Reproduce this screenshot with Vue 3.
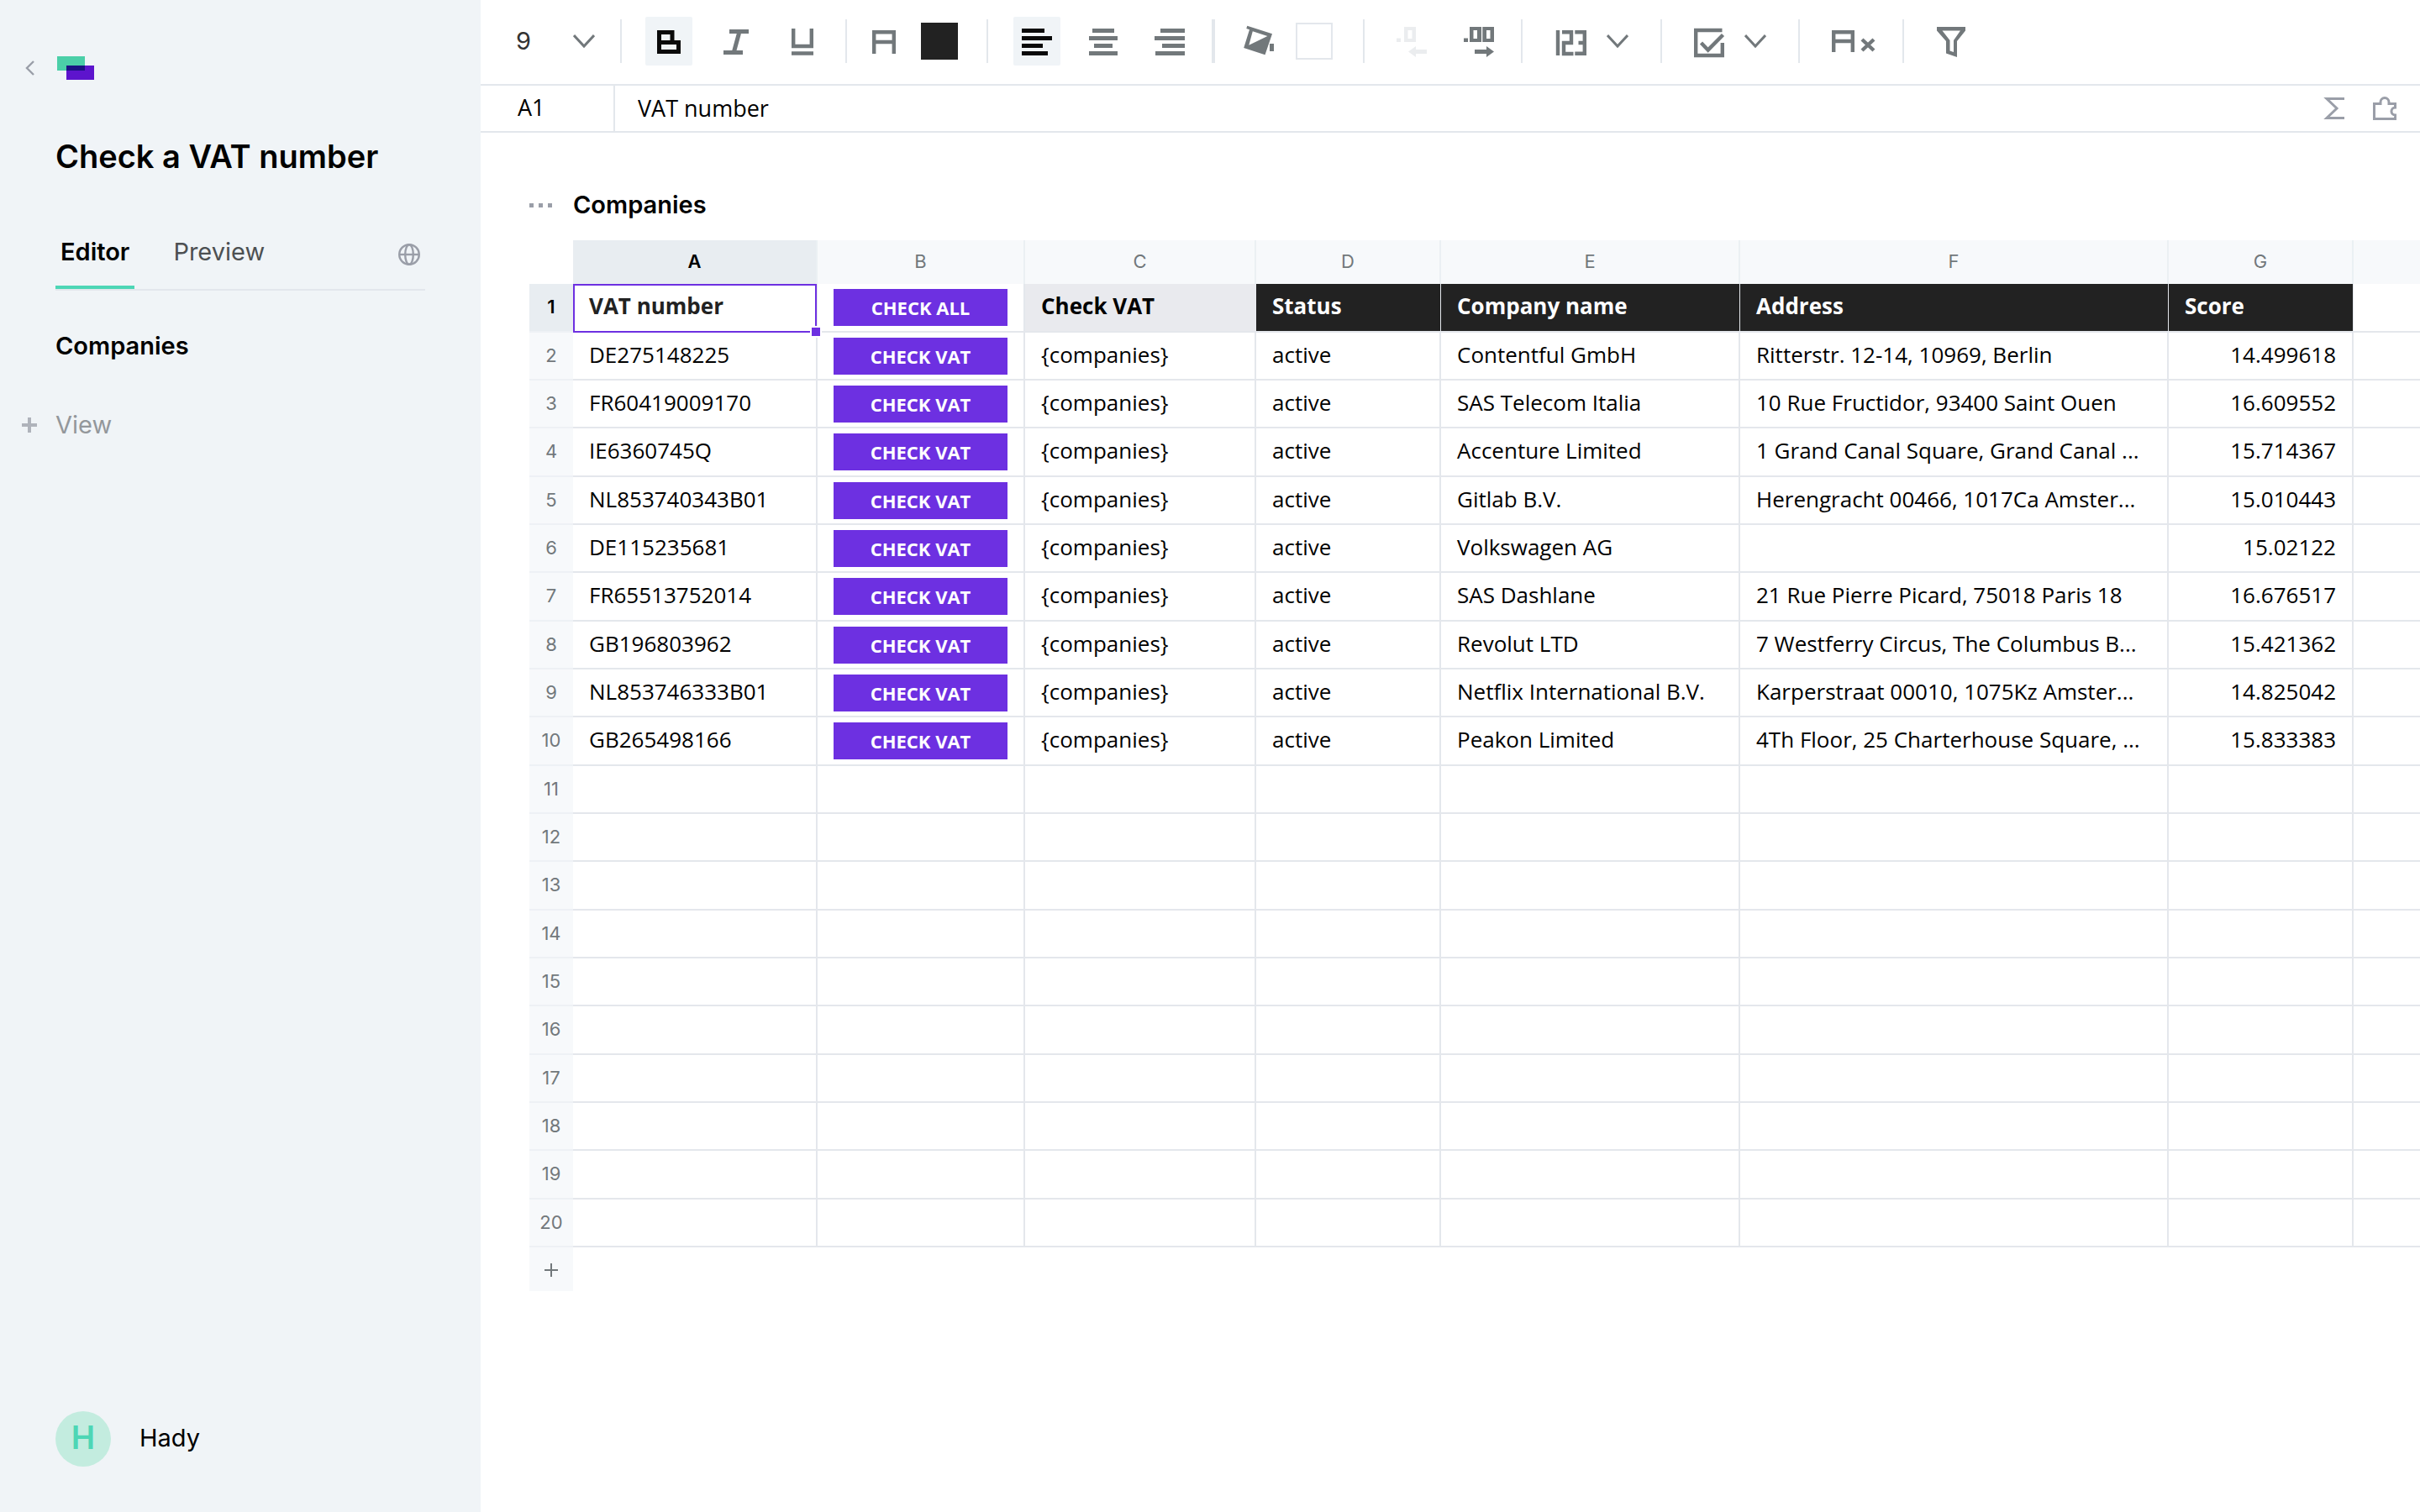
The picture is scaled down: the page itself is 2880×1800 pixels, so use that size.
<template>
  <div class="workspace">
    <aside class="sidebar">
      <div class="brand-row">
        <button type="button" class="back-button" aria-label="Back">
          <svg width="12" height="18" viewBox="0 0 12 18">
            <path d="M10 1 2 9l8 8" fill="none" stroke="#9a9ea8" stroke-width="2.4" />
          </svg>
        </button>
        <a href="#" class="logo" aria-label="Home">
          <svg width="44" height="28" viewBox="0 0 44 28">
            <rect width="33" height="17" fill="#4bcfa8" />
            <rect x="11" y="11" width="33" height="17" fill="#5d14cd" />
            <rect x="11" y="11" width="22" height="6" fill="#1b1383" />
          </svg>
        </a>
      </div>

      <h1 class="doc-title">Check a VAT number</h1>

      <nav class="tabs">
        <a href="#editor" class="tab active">Editor</a>
        <a href="#preview" class="tab">Preview</a>
        <button type="button" class="globe-button" aria-label="Publish">
          <svg width="26" height="26" viewBox="0 0 26 26" fill="none" stroke="#9a9ea8" stroke-width="2.4">
            <circle cx="13" cy="13" r="11.8" />
            <ellipse cx="13" cy="13" rx="4.8" ry="11.8" />
            <path d="M1 13h24" />
          </svg>
        </button>
      </nav>

      <a href="#companies" class="view-link">Companies</a>
      <button type="button" class="add-view">
        <svg width="18" height="18" viewBox="0 0 18 18">
          <path d="M9 0v18M0 9h18" stroke="#afb3bb" stroke-width="4" />
        </svg>
        <span>View</span>
      </button>

      <div class="user">
        <span class="avatar">H</span>
        <span class="user-name">Hady</span>
      </div>
    </aside>

    <main class="main">
      <div class="toolbar">
        <div class="group size-group">
          <select v-model="fontSize" class="size-select" aria-label="Font size">
            <option v-for="size in fontSizes" :key="size" :value="size">{{ size }}</option>
          </select>
          <svg class="chevron" width="26" height="18" viewBox="0 0 26 18"><path d="M1 2l12 13L25 2" /></svg>
        </div>

        <div class="group style-group">
          <button type="button" class="tool pressed" aria-label="Bold">
            <svg viewBox="0 0 56 58"><path class="line" d="M16.5 30.5v-12H32v12M16.5 30.5h23v11h-23z" /></svg>
          </button>
          <button type="button" class="tool" aria-label="Italic">
            <svg viewBox="0 0 56 58"><path class="line" d="M21 17.5h23M14 42.5h23M32.5 19.500l-6 22" /></svg>
          </button>
          <button type="button" class="tool" aria-label="Underline">
            <svg viewBox="0 0 56 58"><path class="line number-line" d="M18.2 14v21h21.600V14M16 43.500h26" /></svg>
          </button>
        </div>

        <div class="group color-group">
          <button type="button" class="tool" aria-label="Text color">
            <svg viewBox="0 0 56 58"><path class="line number-line" d="M16.2 44V18.200h23.600V44M16.200 30h23.600" /></svg>
          </button>
          <button type="button" class="swatch dark" aria-label="Current text color"></button>
        </div>

        <div class="group align-group">
          <button type="button" class="tool pressed" aria-label="Align left">
            <svg viewBox="0 0 56 58"><path class="line" d="M10 16.5h27M10 25.5h36M10 34.5h25M10 43.5h31" /></svg>
          </button>
          <button type="button" class="tool" aria-label="Align center">
            <svg viewBox="0 0 56 58"><path class="line" d="M15 16.5h26M11 25.5h34M17 34.5h22M11 43.5h34" /></svg>
          </button>
          <button type="button" class="tool" aria-label="Align right">
            <svg viewBox="0 0 56 58"><path class="line" d="M17 16.5h29M10 25.5h36M19 34.5h27M11 43.5h35" /></svg>
          </button>
        </div>

        <div class="group fill-group">
          <button type="button" class="tool" aria-label="Fill color">
            <svg viewBox="0 0 56 58">
              <path
                fill-rule="evenodd"
                d="M14.3 10.7 44 20.3l-8.5 25L10.2 37l6.8-21.7-3.700-1.300zM20.800 17.300l-4.500 16.400L38.400 23z"
              />
              <path d="M41 32h5v9h-5z" />
            </svg>
          </button>
          <button type="button" class="swatch" aria-label="Current fill color"></button>
        </div>

        <div class="group decimal-group">
          <button type="button" class="tool" aria-label="Fewer decimals" disabled>
            <svg viewBox="0 0 56 58">
              <path fill-rule="evenodd" d="M10 25.5h5V30h-5zM19 12h14v18H19zM23.5 16v10h5V16z" />
              <path d="M24 41.500 33 35v4h13v5H33v4z" />
            </svg>
          </button>
          <button type="button" class="tool" aria-label="More decimals">
            <svg viewBox="0 0 56 58">
              <path
                fill-rule="evenodd"
                d="M10 25.5h5V30h-5zM17 12h14v18H17zM21.5 16v10h4.500V16zM32.300 12H46v18H32.300zM37 16v10h4.500V16z"
              />
              <path d="M46 41.500 37 35v4H23v5h14v4z" />
            </svg>
          </button>
        </div>

        <div class="group menu-group number-group">
          <button type="button" class="tool" aria-label="Number format">
            <svg viewBox="0 0 56 58">
              <path
                class="line number-line"
                d="M12 16v30M17 18.200h11v12.800h-9v13h11.500M32.300 18.200h11.500v25.600H32.300M36.500 31h8"
              />
            </svg>
          </button>
          <svg class="chevron" width="26" height="18" viewBox="0 0 26 18"><path d="M1 2l12 13L25 2" /></svg>
        </div>

        <div class="group menu-group">
          <button type="button" class="tool" aria-label="Cell type">
            <svg viewBox="0 0 56 58">
              <path class="line number-line" d="M43.500 16H12.200v30h31.600V31M18.500 31l8.200 8.500L44.500 21.500" />
            </svg>
          </button>
          <svg class="chevron" width="26" height="18" viewBox="0 0 26 18"><path d="M1 2l12 13L25 2" /></svg>
        </div>

        <div class="group clear-group">
          <button type="button" class="tool" aria-label="Clear formatting">
            <svg viewBox="0 0 56 58">
              <path class="line number-line" d="M4.200 42V18.200h22.600V42M4.200 29h22.600M38 27l14 13M52 27 38 40" />
            </svg>
          </button>
        </div>

        <div class="group filter-group">
          <button type="button" class="tool" aria-label="Filter">
            <svg viewBox="0 0 56 58">
              <path
                fill-rule="evenodd"
                d="M11 12h34v4.500L35 29v19l-13-4.500V29L11 16.500zM17.500 16.500l9 11.500v12.500l4.500 1.500V28l8-11.500z"
              />
            </svg>
          </button>
        </div>
      </div>

      <div class="formula-bar">
        <label class="cell-name" for="formula">A1</label>
        <input id="formula" v-model="formula" class="formula-input" type="text" />
        <button type="button" class="bar-button" aria-label="Functions">
          <svg width="28" height="28" viewBox="0 0 28 28">
            <path d="M26 2.500H5L17 14 5 25.500h21" fill="none" stroke="#9a9ea8" stroke-width="3" />
          </svg>
        </button>
        <button type="button" class="bar-button" aria-label="Extensions">
          <svg width="28" height="28" viewBox="0 0 28 28">
            <path
              d="M1.500 8.500H9V6.500a5 5 0 0 1 10 0v2h7.500V13a4.500 4.500 0 0 0 0 9v4.500h-25z"
              fill="none"
              stroke="#9a9ea8"
              stroke-width="3"
            />
          </svg>
        </button>
      </div>

      <section class="sheet">
        <header class="sheet-header">
          <button type="button" class="more-button" aria-label="Table options">
            <i></i><i></i><i></i>
          </button>
          <h2>Companies</h2>
        </header>

        <table class="grid">
          <colgroup>
            <col class="col-index" />
            <col v-for="letter in columns" :key="letter" :class="`col-${letter.toLowerCase()}`" />
            <col />
          </colgroup>
          <thead>
            <tr>
              <td class="corner"></td>
              <th v-for="letter in columns" :key="letter" scope="col" :class="{ current: letter === 'A' }">
                {{ letter }}
              </th>
              <th class="last"></th>
            </tr>
          </thead>
          <tbody>
            <tr class="title-row">
              <th scope="row" class="current">1</th>
              <td class="selected">VAT number</td>
              <td class="action"><button type="button" class="check-button">CHECK ALL</button></td>
              <td class="shaded">Check VAT</td>
              <td v-for="title in resultTitles" :key="title" class="dark">{{ title }}</td>
              <td class="last"></td>
            </tr>
            <tr v-for="(row, index) in rows" :key="row.vat">
              <th scope="row">{{ index + 2 }}</th>
              <td>{{ row.vat }}</td>
              <td class="action"><button type="button" class="check-button">CHECK VAT</button></td>
              <td>{companies}</td>
              <td>active</td>
              <td>{{ row.name }}</td>
              <td>{{ row.address }}</td>
              <td class="number">{{ row.score }}</td>
              <td class="last"></td>
            </tr>
            <tr v-for="n in 10" :key="n">
              <th scope="row">{{ n + 10 }}</th>
              <td v-for="letter in columns" :key="letter"></td>
              <td class="last"></td>
            </tr>
          </tbody>
        </table>
        <button type="button" class="add-row" aria-label="Add row">
          <svg width="16" height="16" viewBox="0 0 16 16">
            <path d="M8 0v16M0 8h16" stroke="#72787b" stroke-width="2" />
          </svg>
        </button>
      </section>
    </main>
  </div>
</template>

<script setup>
import { ref } from 'vue'

const fontSizes = ['8', '9', '10', '12', '14', '18']
const fontSize = ref('9')
const formula = ref('VAT number')

const columns = ['A', 'B', 'C', 'D', 'E', 'F', 'G']
const resultTitles = ['Status', 'Company name', 'Address', 'Score']

const rows = [
  { vat: 'DE275148225', name: 'Contentful GmbH', address: 'Ritterstr. 12-14, 10969, Berlin', score: '14.499618' },
  { vat: 'FR60419009170', name: 'SAS Telecom Italia', address: '10 Rue Fructidor, 93400 Saint Ouen', score: '16.609552' },
  { vat: 'IE6360745Q', name: 'Accenture Limited', address: '1 Grand Canal Square, Grand Canal ...', score: '15.714367' },
  { vat: 'NL853740343B01', name: 'Gitlab B.V.', address: 'Herengracht 00466, 1017Ca Amster...', score: '15.010443' },
  { vat: 'DE115235681', name: 'Volkswagen AG', address: '', score: '15.02122' },
  { vat: 'FR65513752014', name: 'SAS Dashlane', address: '21 Rue Pierre Picard, 75018 Paris 18', score: '16.676517' },
  { vat: 'GB196803962', name: 'Revolut LTD', address: '7 Westferry Circus, The Columbus B...', score: '15.421362' },
  { vat: 'NL853746333B01', name: 'Netflix International B.V.', address: 'Karperstraat 00010, 1075Kz Amster...', score: '14.825042' },
  { vat: 'GB265498166', name: 'Peakon Limited', address: '4Th Floor, 25 Charterhouse Square, ...', score: '15.833383' },
]
</script>

<style>
body {
  background: #fff;
}
</style>

<style scoped>
.workspace {
  display: flex;
  min-height: 100vh;
  color: #000;
  font-family: Inter, 'Liberation Sans', sans-serif;
  font-size: 29px;
}

.workspace *,
.workspace *::before,
.workspace *::after {
  box-sizing: border-box;
}

button {
  padding: 0;
  border: none;
  background: none;
  color: inherit;
  font: inherit;
  cursor: pointer;
}

a {
  color: inherit;
  text-decoration: none;
}

svg {
  display: block;
}

/* sidebar */
.sidebar {
  display: flex;
  flex: 0 0 572px;
  flex-direction: column;
  align-items: flex-start;
  padding: 67px 66px 54px;
  background: #f0f4f7;
}

.brand-row {
  display: flex;
  align-items: center;
  gap: 26px;
  height: 28px;
  margin-left: -36px;
}

.doc-title {
  margin: 67px 0 0;
  font-size: 38px;
  font-weight: 600;
  line-height: 48px;
  white-space: nowrap;
}

.tabs {
  display: flex;
  align-self: stretch;
  gap: 40px;
  height: 64px;
  margin-top: 72px;
  border-bottom: 2px solid #e3e7ec;
}

.tab {
  padding: 0 6px;
  color: #4d5052;
  line-height: 36px;
}

.tab.active {
  border-bottom: 4px solid #4dd6b5;
  color: #000;
  font-weight: 600;
}

.globe-button {
  align-self: flex-start;
  margin: 8px 6px 0 auto;
}

.view-link {
  margin-top: 48px;
  font-weight: 600;
  line-height: 36px;
}

.add-view {
  display: flex;
  align-items: center;
  gap: 22px;
  margin: 58px 0 0 -40px;
  color: #93979b;
  line-height: 36px;
}

.user {
  display: flex;
  align-items: center;
  gap: 34px;
  margin-top: auto;
}

.user-name {
  padding-bottom: 4px;
}

.avatar {
  width: 66px;
  height: 66px;
  border-radius: 50%;
  background: #c3ecdf;
  color: #4dd6b5;
  font-size: 38px;
  font-weight: 600;
  line-height: 62px;
  text-align: center;
}

/* toolbar */
.main {
  flex: 1;
  min-width: 0;
  overflow: hidden;
}

.toolbar {
  display: flex;
  align-items: center;
  height: 102px;
  padding-bottom: 2px;
  border-bottom: 2px solid #e3e7ec;
}

.group {
  display: flex;
  flex: none;
  align-items: center;
  height: 52px;
  border-right: 2px solid #e3e7ec;
}

.size-group {
  padding: 0 30px 0 42px;
}

.style-group,
.align-group {
  gap: 23px;
}

.style-group {
  padding: 0 24px 0 28px;
}

.color-group,
.fill-group {
  gap: 16px;
}

.color-group {
  padding: 0 34px 0 16px;
}

.align-group {
  padding: 0 22px 0 30px;
  border-right-width: 4px;
}

.fill-group {
  padding: 0 36px 0 24px;
}

.decimal-group {
  gap: 24px;
  padding: 0 22px 0 28px;
}

.menu-group {
  gap: 14px;
  padding: 0 38px 0 28px;
}

.number-group {
  padding-left: 30px;
}

.clear-group {
  padding: 0 30px 0 36px;
}

.filter-group {
  padding-left: 28px;
  border-right: none;
}

.size-select {
  width: 68px;
  padding: 0 0 2px;
  border: none;
  appearance: none;
  background: none;
  color: #333;
  font: inherit;
}

.chevron path {
  fill: none;
  stroke: #72787b;
  stroke-width: 3;
}

.tool {
  width: 56px;
  height: 58px;
  border-radius: 2px;
  color: #72787b;
}

.tool svg {
  width: 56px;
  height: 58px;
  fill: currentColor;
}

.tool .line {
  fill: none;
  stroke: currentColor;
  stroke-width: 5;
}

.tool .number-line {
  stroke-width: 4.4;
}

.tool.pressed {
  background: #f0f4f7;
  color: #0a0a0a;
}

.tool:disabled {
  color: #ebedef;
}

.swatch {
  width: 44px;
  height: 44px;
  border: 2px solid #e3e7ec;
  background: #fff;
}

.swatch.dark {
  border-color: #222;
  background: #222;
}

/* formula bar */
.formula-bar {
  display: flex;
  align-items: center;
  gap: 32px;
  height: 56px;
  padding-right: 28px;
  border-bottom: 2px solid #e3e7ec;
  font-family: 'Open Sans', 'Noto Sans', sans-serif;
  font-size: 27px;
}

.cell-name {
  align-self: stretch;
  width: 160px;
  margin-right: -5px;
  padding-left: 44px;
  border-right: 2px solid #e3e7ec;
  line-height: 52px;
}

.formula-input {
  flex: 1;
  min-width: 0;
  padding: 0 0 2px;
  border: none;
  outline: none;
  color: #000;
  font: inherit;
}

/* sheet */
.sheet {
  padding: 64px 0 0 58px;
}

.sheet-header {
  display: flex;
  align-items: center;
  gap: 25px;
  height: 44px;
  margin-bottom: 20px;
}

.sheet-header h2 {
  margin: 0;
  font-size: 29px;
  font-weight: 600;
  line-height: 44px;
}

.more-button {
  display: flex;
  gap: 6px;
}

.more-button i {
  width: 5px;
  height: 5px;
  background: #9a9ea8;
}

.grid {
  width: 100%;
  border-spacing: 0;
  table-layout: fixed;
  font-family: 'Open Sans', 'Noto Sans', sans-serif;
  font-size: 26px;
}

.col-index {
  width: 52px;
}

.col-a {
  width: 291px;
}

.col-b {
  width: 247px;
}

.col-c {
  width: 275px;
}

.col-d,
.col-g {
  width: 220px;
}

.col-e {
  width: 356px;
}

.col-f {
  width: 510px;
}

.grid th {
  padding: 0;
  background: #f7f9fb;
  color: #72787b;
  font-family: Inter, 'Liberation Sans', sans-serif;
  font-size: 22px;
  font-weight: 400;
  text-align: center;
}

.grid th.current {
  background: #e8edf1;
  color: #000;
  font-weight: 600;
}

.grid thead th {
  height: 52px;
  padding-bottom: 2px;
  border-right: 2px solid #ebf0f3;
}

.grid thead .corner {
  border: none;
}

.grid tbody tr {
  height: 57px;
}

.grid tbody tr:nth-child(3n + 1) {
  height: 58px;
}

.grid tbody th {
  padding-bottom: 2px;
  border-bottom: 2px solid #eef1f5;
}

.grid td {
  padding: 0 19px 4px;
  border-right: 2px solid #e4e7ec;
  border-bottom: 2px solid #e4e7ec;
  line-height: 44px;
  white-space: nowrap;
}

.grid .action {
  padding-bottom: 0;
}

.grid .last {
  border-right: none;
}

.title-row td {
  font-weight: 700;
}

.grid .selected {
  position: relative;
  color: #222;
}

.selected::before {
  position: absolute;
  inset: 0 -1px -2px 0;
  border: 2px solid #6d30e1;
  content: '';
}

.selected::after {
  position: absolute;
  right: -7px;
  bottom: -8px;
  width: 14px;
  height: 14px;
  border: 2px solid #fff;
  background: #6d30e1;
  content: '';
}

.grid .shaded {
  border-right: none;
  background: #e9eaee;
}

.grid .dark {
  border-right-width: 1px;
  background: #222;
  background-clip: padding-box;
  color: #fff;
}

.grid .number {
  text-align: right;
}

.check-button {
  display: block;
  width: 100%;
  height: 44px;
  background: #6d30e1;
  color: #fff;
  font-size: 22px;
  font-weight: 700;
}

.add-row {
  display: grid;
  place-items: center;
  width: 52px;
  height: 52px;
  padding-top: 2px;
  background: #f7f9fb;
}
</style>
